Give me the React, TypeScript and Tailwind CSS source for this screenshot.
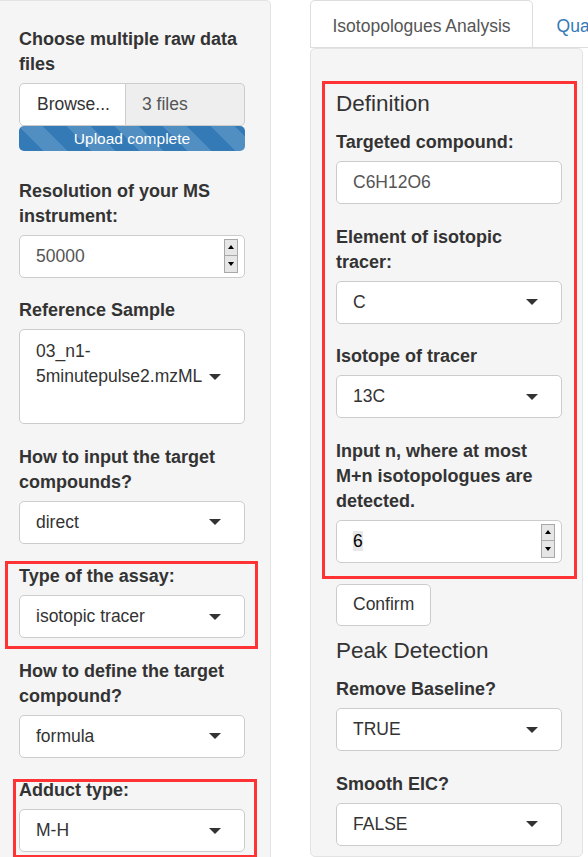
import React from "react";

function Label({ children }: { children: React.ReactNode }) {
  return <label className="mb-[6px] block text-[18px] font-bold leading-[25px] text-[#333]">{children}</label>;
}

function Caret() {
  return (
    <span className="absolute right-[23px] top-1/2 h-0 w-0 -translate-y-1/2 border-x-[6px] border-t-[6px] border-x-transparent border-t-[#333]" />
  );
}

function SelectBox({ value }: { value: string }) {
  return (
    <div className="relative h-[43px] rounded-[5px] border border-[#ccc] bg-white pl-[16px] leading-[41px] text-[#333]">
      {value}
      <Caret />
    </div>
  );
}

function TextBox({ value }: { value: string }) {
  return (
    <div className="h-[43px] rounded-[5px] border border-[#ccc] bg-white pl-[16px] leading-[41px] text-[#555]">
      {value}
    </div>
  );
}

function Spinner() {
  return (
    <div className="absolute right-[6px] top-[3px] flex w-[14px] flex-col">
      <span className="flex h-[17px] items-center justify-center border border-[#a8a8a8] bg-[#e6e6e6]">
        <span className="h-0 w-0 border-x-[3.5px] border-b-[4px] border-x-transparent border-b-black" />
      </span>
      <span className="flex h-[17px] items-center justify-center border border-t-0 border-[#a8a8a8] bg-[#e6e6e6]">
        <span className="h-0 w-0 border-x-[3.5px] border-t-[4px] border-x-transparent border-t-black" />
      </span>
    </div>
  );
}

function NumberBox({ children }: { children: React.ReactNode }) {
  return (
    <div className="relative h-[43px] rounded-[5px] border border-[#ccc] bg-white pl-[16px] leading-[41px] text-[#555]">
      {children}
      <Spinner />
    </div>
  );
}

export default function App() {
  return (
    <div className="flex h-[857px] w-[588px] overflow-hidden bg-white font-['Liberation_Sans',Arial,sans-serif] text-[17.5px] text-[#333]">
      {/* sidebar */}
      <div className="h-[900px] w-[271px] shrink-0 rounded-tr-[5px] border-r border-t border-[#e3e3e3] bg-[#f5f5f5] pl-[19px] pr-[25px] pt-[26px]">
        <div className="flex flex-col gap-[20.5px]">
          <div>
            <Label>Choose multiple raw data files</Label>
            <div className="flex h-[43px]">
              <div className="w-[107px] rounded-l-[5px] border border-[#ccc] bg-white pl-[17px] leading-[41px] text-[#333]">
                Browse...
              </div>
              <div className="flex-1 rounded-r-[5px] border border-l-0 border-[#ccc] bg-[#eee] pl-[16px] leading-[41px] text-[#555]">
                3 files
              </div>
            </div>
            <div className="mb-[7px] h-[25px] rounded-[5px] bg-[#337ab7] bg-[linear-gradient(45deg,rgba(255,255,255,.15)_25%,transparent_25%,transparent_50%,rgba(255,255,255,.15)_50%,rgba(255,255,255,.15)_75%,transparent_75%,transparent)] bg-[length:48px_48px] text-center text-[15.5px] leading-[25px] text-white">
              Upload complete
            </div>
          </div>

          <div>
            <Label>Resolution of your MS instrument:</Label>
            <NumberBox>50000</NumberBox>
          </div>

          <div>
            <Label>Reference Sample</Label>
            <div className="relative h-[95px] rounded-[5px] border border-[#ccc] bg-white pl-[16px] pr-[38px] pt-[8.5px] leading-[25px] text-[#333]">
              03_n1-5minutepulse2.mzML
              <Caret />
            </div>
          </div>

          <div>
            <Label>How to input the target compounds?</Label>
            <SelectBox value="direct" />
          </div>

          <div className="relative">
            <Label>Type of the assay:</Label>
            <SelectBox value="isotopic tracer" />
            <div className="pointer-events-none absolute -bottom-[11px] -left-[14px] -right-[13px] -top-[3px] border-[3px] border-[#f33]" />
          </div>

          <div>
            <Label>How to define the target compound?</Label>
            <SelectBox value="formula" />
          </div>

          <div className="relative">
            <Label>Adduct type:</Label>
            <SelectBox value="M-H" />
            <div className="pointer-events-none absolute -bottom-[5.5px] -left-[6px] -right-[12px] top-[1px] border-[3px] border-[#f33]" />
          </div>
        </div>
      </div>

      {/* main */}
      <div className="ml-[39px] flex min-w-0 flex-1 flex-col">
        <div className="flex h-[53px] overflow-hidden whitespace-nowrap border-b border-[#ddd]">
          <div className="-mb-px h-[53px] shrink-0 rounded-t-[5px] border border-[#ddd] border-b-transparent bg-white px-[21.5px] leading-[51px] text-[#555]">
            Isotopologues Analysis
          </div>
          <div className="ml-[2.5px] h-[53px] shrink-0 border border-transparent px-[20px] leading-[51px] text-[#337ab7]">
            Quantification
          </div>
        </div>

        <div className="h-[900px] w-[273px] rounded-[5px] border border-[#e3e3e3] bg-[#f5f5f5] pl-[25px] pr-[20px] pt-[42.5px]">
          <div className="relative">
            <h3 className="mb-[14px] text-[22.5px] leading-[25px] text-[#333]">Definition</h3>
            <div className="flex flex-col gap-[20.5px]">
              <div>
                <Label>Targeted compound:</Label>
                <TextBox value="C6H12O6" />
              </div>
              <div>
                <Label>Element of isotopic tracer:</Label>
                <SelectBox value="C" />
              </div>
              <div>
                <Label>Isotope of tracer</Label>
                <SelectBox value="13C" />
              </div>
              <div>
                <Label>Input n, where at most M+n isotopologues are detected.</Label>
                <NumberBox>
                  <span className="bg-[#e8e8e8] text-black">6</span>
                </NumberBox>
              </div>
            </div>
            <div className="pointer-events-none absolute -bottom-[16px] -left-[14px] -right-[15px] -top-[10.5px] border-[3px] border-[#f33]" />
          </div>

          <button className="mt-[21px] h-[42px] rounded-[5px] border border-[#ccc] bg-white px-[16px] text-[#333]">
            Confirm
          </button>

          <h3 className="mb-[14px] mt-[12.5px] text-[22.5px] leading-[25px] text-[#333]">Peak Detection</h3>
          <div className="flex flex-col gap-[20.5px]">
            <div>
              <Label>Remove Baseline?</Label>
              <SelectBox value="TRUE" />
            </div>
            <div>
              <Label>Smooth EIC?</Label>
              <SelectBox value="FALSE" />
            </div>
          </div>
        </div>
      </div>
    </div>
  );
}
